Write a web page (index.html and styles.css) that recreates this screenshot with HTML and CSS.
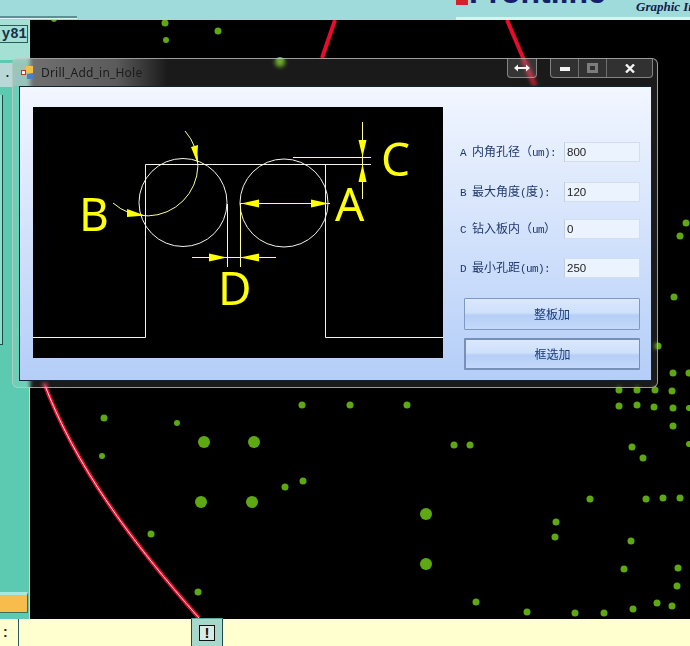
FILE: index.html
```html
<!DOCTYPE html>
<html lang="en">
<head>
    <meta charset="UTF-8">
    <title>Drill_Add_in_Hole</title>
    <link rel="stylesheet" href="styles.css">
</head>
<body>
    <div class="topbar">
        <div class="top-rule"></div>
        <div class="brand">
            <span class="brand-mark"></span>
            <span class="brand-name">Frontline</span>
            <span class="brand-sub">Graphic Inc</span>
        </div>
    </div>

    <div class="main">
        <div class="sidebar">
            <div class="side-top">
                <div class="side-label">y81</div>
            </div>
            <div class="side-body">
                <div class="side-tab">.</div>
                <div class="side-strip"></div>
            </div>
            <div class="side-orange"></div>
        </div>

        <!-- board view, viewBox keeps screen coordinates -->
        <svg class="board" viewBox="30 20 660 599">
            <path class="trace" d="M335 20 L322 58"/>
            <path class="trace" d="M507 20 L535 86"/>
            <path class="trace" d="M44 383 C75 465 130 540 199 618"/>
            <path class="trace-core" d="M44 383 C75 465 130 540 199 618"/>

            <circle class="pad" cx="165" cy="23" r="3.5"/>
            <circle class="pad" cx="166" cy="40" r="3"/>
            <circle class="pad" cx="218" cy="31" r="3.5"/>
            <circle class="pad" cx="54" cy="19" r="3"/>
            <circle class="pad" cx="280" cy="62" r="5"/>
            <circle class="pad" cx="686" cy="223" r="3.5"/>
            <circle class="pad" cx="680" cy="236" r="3.5"/>
            <circle class="pad" cx="674" cy="297" r="3.5"/>
            <circle class="pad" cx="658" cy="346" r="3.5"/>
            <circle class="pad" cx="673" cy="373" r="3.5"/>
            <circle class="pad" cx="689" cy="373" r="3.5"/>

            <circle class="pad" cx="619" cy="390" r="3.5"/>
            <circle class="pad" cx="637" cy="390" r="3.5"/>
            <circle class="pad" cx="655" cy="390" r="3.5"/>
            <circle class="pad" cx="672" cy="391" r="3.5"/>
            <circle class="pad" cx="619" cy="406" r="3.5"/>
            <circle class="pad" cx="637" cy="405" r="3.5"/>
            <circle class="pad" cx="654" cy="407" r="3.5"/>
            <circle class="pad" cx="673" cy="408" r="3.5"/>
            <circle class="pad" cx="689" cy="408" r="3"/>
            <circle class="pad" cx="673" cy="426" r="3.5"/>
            <circle class="pad" cx="689" cy="444" r="3"/>
            <circle class="pad" cx="454" cy="445" r="3.5"/>
            <circle class="pad" cx="470" cy="445" r="3.5"/>
            <circle class="pad" cx="632" cy="447" r="3.5"/>
            <circle class="pad" cx="643" cy="458" r="3.5"/>
            <circle class="pad" cx="590" cy="499" r="3.5"/>
            <circle class="pad" cx="646" cy="499" r="3.5"/>
            <circle class="pad" cx="663" cy="498" r="3.5"/>
            <circle class="pad" cx="680" cy="498" r="3.5"/>
            <circle class="pad" cx="556" cy="522" r="3.5"/>
            <circle class="pad" cx="555" cy="537" r="3.5"/>
            <circle class="pad" cx="631" cy="541" r="3.5"/>
            <circle class="pad" cx="624" cy="569" r="3.5"/>
            <circle class="pad" cx="678" cy="568" r="3.5"/>
            <circle class="pad" cx="677" cy="586" r="3.5"/>
            <circle class="pad" cx="476" cy="602" r="3.5"/>
            <circle class="pad" cx="527" cy="612" r="3.5"/>
            <circle class="pad" cx="575" cy="613" r="3.5"/>
            <circle class="pad" cx="604" cy="613" r="3.5"/>
            <circle class="pad" cx="633" cy="609" r="3.5"/>
            <circle class="pad" cx="657" cy="603" r="3.5"/>
            <circle class="pad" cx="672" cy="606" r="3.5"/>

            <circle class="pad" cx="302" cy="405" r="3.5"/>
            <circle class="pad" cx="350" cy="405" r="3.5"/>
            <circle class="pad" cx="407" cy="405" r="3.5"/>
            <circle class="pad" cx="104" cy="418" r="3.5"/>
            <circle class="pad" cx="177" cy="423" r="3"/>
            <circle class="pad" cx="102" cy="456" r="3"/>
            <circle class="pad" cx="303" cy="481" r="3.5"/>
            <circle class="pad" cx="285" cy="487" r="3.5"/>
            <circle class="pad" cx="151" cy="534" r="3.5"/>
            <circle class="pad" cx="198" cy="592" r="3.5"/>
            <circle class="pad" cx="204" cy="442" r="6"/>
            <circle class="pad" cx="254" cy="442" r="6"/>
            <circle class="pad" cx="201" cy="502" r="6"/>
            <circle class="pad" cx="252" cy="502" r="6"/>
            <circle class="pad" cx="426" cy="514" r="6"/>
            <circle class="pad" cx="426" cy="564" r="6"/>
        </svg>
    </div>

    <div class="statusbar">
        <div class="prompt">:</div>
        <div class="command-left"></div>
        <div class="alert-btn"><span class="alert-box">!</span></div>
        <div class="command-right"></div>
    </div>

    <div class="window">
        <div class="titlebar">
            <svg class="title-icon" width="12" height="13" viewBox="0 0 12 13">
                <rect x="5" y="0" width="7" height="7" fill="#f5c04a"/>
                <rect x="0.5" y="4.5" width="4" height="4" fill="#f4f4f4" stroke="#c8322a"/>
                <rect x="6" y="8" width="6" height="5" fill="#4a80c8"/>
            </svg>
            <span class="title-text">Drill_Add_in_Hole</span>
            <div class="win-btn resize-btn">
                <svg width="16" height="8" viewBox="0 0 16 8">
                    <path d="M0 4 L4 0.5 V3 H12 V0.5 L16 4 L12 7.5 V5 H4 V7.5 Z" fill="#f4f4f4"/>
                </svg>
            </div>
            <div class="win-group">
                <div class="win-btn min-btn">
                    <svg width="10" height="4" viewBox="0 0 10 4"><rect width="10" height="4" fill="#f4f4f4"/></svg>
                </div>
                <div class="win-btn max-btn">
                    <svg width="11" height="10" viewBox="0 0 11 10">
                        <path d="M0 0 H11 V10 H0 Z M3 3 V7 H8 V3 Z" fill="#7c7c7c" fill-rule="evenodd"/>
                    </svg>
                </div>
                <div class="win-btn close-btn">
                    <svg width="10" height="9" viewBox="0 0 10 9">
                        <path d="M1 0.5 L9 8.5 M9 0.5 L1 8.5" stroke="#f4f4f4" stroke-width="2.4"/>
                    </svg>
                </div>
            </div>
        </div>

        <div class="client">
            <svg class="preview" width="410" height="251" viewBox="33 107 410 251">
                <path class="line-white" d="M33 337.5 H145.5 V164.5 H371 M325.5 164.5 V337.5 H443"/>
                <circle class="line-white" cx="183" cy="202.5" r="44"/>
                <circle class="line-white" cx="284" cy="203" r="44"/>
                <path class="line-yellow" d="M293 157.5 H371 M362.5 122 V199 M240 203.5 H330 M192 257.5 H276 M227.5 204 V267 M240.5 204 V267"/>
                <path class="line-yellow" d="M113 203 A51 51 0 0 0 185 131"/>

                <path class="arrow" d="M241 203.5 L259 199.5 V207.5 Z"/>
                <path class="arrow" d="M329 203.5 L311 199.5 V207.5 Z"/>
                <path class="arrow" d="M227 257.5 L209 253.5 V261.5 Z"/>
                <path class="arrow" d="M240 257.5 L259 253.5 V261.5 Z"/>
                <path class="arrow" d="M362.5 157 L358.5 140 H366.5 Z"/>
                <path class="arrow" d="M362.5 164 L358.5 182 H366.5 Z"/>
                <path class="arrow" d="M145 215.5 L127 209 L127 217 Z"/>
                <path class="arrow" d="M197 162 L191 147 L198 145 Z"/>

                <text class="dim-letter" x="335" y="221">A</text>
                <text class="dim-letter" x="79" y="231">B</text>
                <text class="dim-letter" x="381" y="176">C</text>
                <text class="dim-letter" x="218" y="305">D</text>
            </svg>

            <div class="params">
                <div class="field">
                    <label class="field-label">A <span class="cjk">内角孔径（</span>um):</label>
                    <input class="field-input" type="text" value="800">
                </div>
                <div class="field field-b">
                    <label class="field-label">B <span class="cjk">最大角度</span>(<span class="cjk">度</span>):</label>
                    <input class="field-input" type="text" value="120">
                </div>
                <div class="field field-c">
                    <label class="field-label">C <span class="cjk">钻入板内（</span>um<span class="cjk">）</span></label>
                    <input class="field-input" type="text" value="0">
                </div>
                <div class="field field-d">
                    <label class="field-label">D <span class="cjk">最小孔距</span>(um):</label>
                    <input class="field-input" type="text" value="250">
                </div>

                <button class="action-btn" type="button">整板加</button>
                <button class="action-btn action-default" type="button">框选加</button>
            </div>
        </div>
    </div>
</body>
</html>
```

FILE: styles.css
```css
* {
    margin: 0;
    padding: 0;
    box-sizing: border-box;
}

body {
    position: relative;
    width: 690px;
    height: 646px;
    overflow: hidden;
    display: flex;
    flex-direction: column;
    background: #000;
    font-family: 'Liberation Sans', sans-serif;
}

/* top strip */
.topbar {
    height: 20px;
    flex: none;
    display: flex;
    justify-content: space-between;
    background: #9fdbdb;
    overflow: hidden;
}

.top-rule {
    width: 77px;
    height: 19px;
    margin-top: -1px;
    border-bottom: 2px solid #5f8f96;
    box-shadow: 0 1px 0 #d6f4f0;
}

.brand {
    width: 234px;
    height: 20px;
    border-bottom: 3px solid #d2f5f0;
    display: flex;
    align-items: flex-start;
}

.brand-mark {
    width: 12px;
    height: 5px;
    flex: none;
    background: #d8202c;
}

.brand-name {
    width: 168px;
    flex: none;
    margin-top: -24px;
    padding-left: 1px;
    font-size: 32px;
    line-height: 32px;
    font-weight: 700;
    color: #14206e;
}

.brand-sub {
    flex: none;
    font-family: 'Liberation Serif', serif;
    font-size: 13px;
    line-height: 14px;
    font-style: italic;
    font-weight: 700;
    white-space: nowrap;
    color: #10204a;
}

/* board area */
.main {
    flex: 1;
    display: flex;
    min-height: 0;
}

.sidebar {
    width: 30px;
    flex: none;
    display: flex;
    flex-direction: column;
    background: #5ccab0;
    border-right: 1px solid #a8e6e0;
}

.side-top {
    height: 40px;
    padding-top: 5px;
    background: #a4e0d4;
}

.side-label {
    height: 18px;
    margin-right: 1px;
    border: 1px solid #2c5a5c;
    border-left: none;
    font-family: 'Liberation Mono', monospace;
    font-size: 14px;
    line-height: 16px;
    font-weight: 700;
    text-align: right;
    color: #14304c;
}

.side-body {
    flex: 1;
    padding-top: 3px;
}

.side-tab {
    width: 12px;
    height: 24px;
    padding-right: 3px;
    background: #b8d8d8;
    font-size: 12px;
    line-height: 20px;
    font-weight: 700;
    text-align: right;
    color: #222;
}

.side-strip {
    width: 3px;
    height: 250px;
    margin-top: 8px;
    background: #8ce0c8;
    border-right: 1px solid #1e4a4a;
    border-bottom: 1px solid #1e4a4a;
}

.side-orange {
    height: 21px;
    margin-bottom: 6px;
    margin-right: 1px;
    border-top: 3px solid #a8e6e0;
    border-bottom: 1px solid #3c6c5c;
    border-right: 1px solid #3c6c5c;
    background: #f7bc4c;
    background-clip: padding-box;
}

.board {
    display: block;
    width: 660px;
    height: 599px;
    background: #000;
}

.trace {
    fill: none;
    stroke: #e80c2c;
    stroke-width: 4;
}

.trace-core {
    fill: none;
    stroke: #ffe4e4;
    stroke-width: 1;
}

.pad {
    fill: #5ea912;
}

/* bottom strip */
.statusbar {
    height: 27px;
    flex: none;
    display: flex;
    background: #ffffd0;
}

.prompt {
    width: 19px;
    border-right: 1px solid #2c5a5c;
    padding-left: 3px;
    font-size: 14px;
    line-height: 26px;
    font-weight: 700;
    color: #222;
}

.command-left {
    width: 172px;
    flex: none;
}

.command-right {
    flex: 1;
}

.alert-btn {
    width: 32px;
    margin-top: -1px;
    display: flex;
    align-items: center;
    justify-content: center;
    background: #a8d8cc;
    border: 1px solid #1e4a4a;
    border-top-color: #5ca8a0;
    border-bottom: none;
}

.alert-box {
    width: 16px;
    height: 16px;
    background: #d8ece4;
    border: 1px solid #111;
    font-size: 15px;
    line-height: 14px;
    font-weight: 700;
    text-align: center;
    color: #111;
}

/* dialog */
.window {
    position: absolute;
    left: 12px;
    top: 58px;
    width: 646px;
    height: 330px;
    padding: 0 5px 6px 6px;
    display: flex;
    flex-direction: column;
    border: 1px solid rgba(200, 200, 200, 0.75);
    border-radius: 6px;
    background: rgba(255, 255, 255, 0.1);
    backdrop-filter: blur(2px);
}

.titlebar {
    height: 27px;
    flex: none;
    margin: 0 -5px 0 -6px;
    padding: 0 4px 0 8px;
    display: flex;
    align-items: flex-start;
    background: linear-gradient(90deg, rgba(190, 190, 190, 0.55) 0, rgba(170, 170, 170, 0.45) 16%, rgba(120, 120, 120, 0) 24%);
}

.title-icon {
    margin-top: 7px;
    flex: none;
}

.title-text {
    margin-left: 8px;
    margin-top: 5px;
    flex: 1;
    font-family: 'Noto Sans', sans-serif;
    font-size: 12px;
    line-height: 17px;
    letter-spacing: 0.2px;
    color: #1c1c1c;
}

.win-btn {
    height: 19px;
    display: flex;
    align-items: center;
    justify-content: center;
}

.resize-btn {
    width: 30px;
    margin-right: 13px;
    border: 1px solid rgba(255, 255, 255, 0.4);
    border-top: none;
    border-radius: 0 0 4px 4px;
    background: rgba(255, 255, 255, 0.12);
}

.win-group {
    display: flex;
    height: 19px;
    border: 1px solid rgba(255, 255, 255, 0.4);
    border-top: none;
    border-radius: 0 0 4px 4px;
    background: rgba(255, 255, 255, 0.1);
}

.min-btn {
    width: 28px;
    height: 18px;
    padding-top: 2px;
    border-right: 1px solid rgba(255, 255, 255, 0.3);
}

.max-btn {
    width: 28px;
    height: 18px;
    border-right: 1px solid rgba(255, 255, 255, 0.3);
}

.close-btn {
    width: 45px;
    height: 18px;
}

.client {
    flex: 1;
    display: flex;
    padding: 20px 0 0 13px;
    border: 1px solid #0e2436;
    background: linear-gradient(180deg, #f2f6ff 0, #b4cef8 100%);
}

.preview {
    display: block;
    flex: none;
    background: #000;
}

.line-white {
    fill: none;
    stroke: #f4f4e8;
    stroke-width: 1;
}

.line-yellow {
    fill: none;
    stroke: #ffff90;
    stroke-width: 1;
}

.arrow {
    fill: #ffff00;
}

.dim-letter {
    font-family: 'Noto Sans', sans-serif;
    font-size: 46px;
    fill: #ffff10;
}

.params {
    width: 181px;
    margin-left: 16px;
    padding-top: 35px;
    display: flex;
    flex-direction: column;
}

.field {
    height: 20px;
    display: flex;
    align-items: center;
    justify-content: space-between;
}

.field + .field {
    margin-top: 17px;
}

.field-b.field-b {
    margin-top: 20px;
}

.field-d.field-d {
    margin-top: 19px;
}

.field-label {
    white-space: pre;
    padding-left: 1px;
    padding-bottom: 3px;
    font-family: 'Liberation Mono', monospace;
    font-size: 11px;
    letter-spacing: -0.6px;
    color: #20386c;
}

.cjk {
    font-family: 'Noto Sans CJK SC', sans-serif;
    font-size: 12px;
    letter-spacing: 0;
}

.field-input {
    width: 76px;
    height: 20px;
    padding: 0 2px;
    background: #eaf3fe;
    border: 1px solid #d2deee;
    border-left-color: #c0cede;
    font-family: 'Liberation Sans', sans-serif;
    font-size: 11.5px;
    color: #222;
}

.action-btn {
    width: 176px;
    height: 32px;
    margin-left: 5px;
    margin-top: 20px;
    padding-bottom: 2px;
    background: linear-gradient(180deg, #dae8fd 0, #cfe0fb 45%, #b6cff6 55%, #c4d9fa 100%);
    border: 1px solid #7f98c0;
    border-radius: 1px;
    font-family: 'Noto Sans CJK SC', sans-serif;
    font-size: 12px;
    color: #1a3a7c;
}

.action-default {
    margin-top: 8px;
    border: 2px solid #7890b8;
    border-right-width: 1px;
}
```
